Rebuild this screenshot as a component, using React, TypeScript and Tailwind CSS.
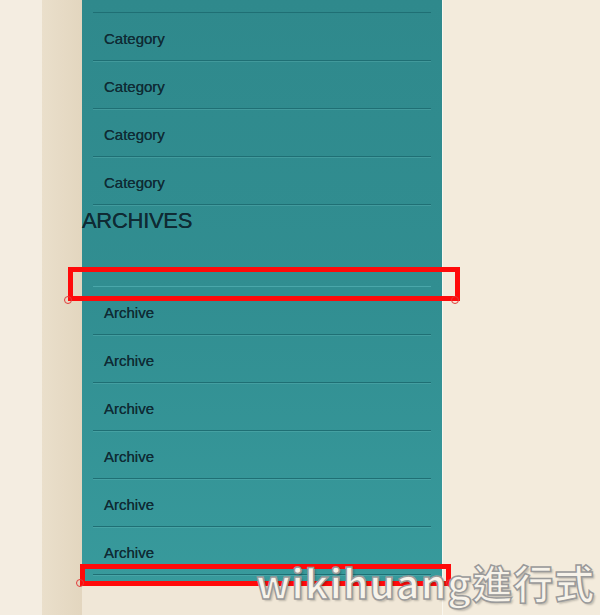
import React from "react";

const Row = ({ label }: { label: string }) => (
  <div className="h-[48px] flex items-center pt-[5px] mx-[11px] border-b border-[#1f6f74] shadow-[0_1px_0_rgba(120,200,200,0.25)]">
    <span className="pl-[11px] text-[15px] text-[#0f2c35] [font-family:'Liberation_Sans',Arial,sans-serif] [text-shadow:0_0_0.4px_#0f2c35]">{label}</span>
  </div>
);

export default function App() {
  return (
    <div className="relative w-[600px] h-[615px] overflow-hidden flex bg-[#f3ebdc] [font-family:'Liberation_Sans',Arial,sans-serif]">
      <div className="w-[42px] h-full bg-[#f4ede1]" />
      <div className="w-[40px] h-full bg-gradient-to-r from-[#eadfcb] to-[#e3d6bf]" />
      <div className="w-[360px] h-full flex flex-col">
        <div className="h-[585px] bg-gradient-to-b from-[#2f898c] via-[#318e91] to-[#389a9c] flex flex-col">
          <div className="h-[13px] mx-[11px] border-b border-[#1f6f74]" />
          <Row label="Category" />
          <Row label="Category" />
          <Row label="Category" />
          <Row label="Category" />
          <h2 className="h-[30px] flex items-center text-[22px] leading-none text-[#0f2a33] tracking-[-0.3px] mt-[1px] [text-shadow:0_0_0.4px_#0f2a33]">ARCHIVES</h2>
          <div className="h-[51px] mx-[11px] border-b border-[#4aa7aa]" />
          <Row label="Archive" />
          <Row label="Archive" />
          <Row label="Archive" />
          <Row label="Archive" />
          <Row label="Archive" />
          <Row label="Archive" />
        </div>
        <div className="flex-1 bg-[#f0e7d7]" />
      </div>
      <div className="flex-1 h-full bg-[#f3ebdc] border-l border-[#f9f6ee]" />

      {/* red annotation boxes */}
      <div className="absolute left-[68px] top-[267px] w-[392px] h-[34px] border-[5px] border-[#ff0a0a]" />
      <div className="absolute left-[64px] top-[296px] w-[8px] h-[8px] rounded-full border border-[#e23a3a]" />
      <div className="absolute left-[451px] top-[296px] w-[8px] h-[8px] rounded-full border border-[#e23a3a]" />
      <div className="absolute left-[80px] top-[564px] w-[371px] h-[22px] border-[5px] border-[#ff0a0a]" />
      <div className="absolute left-[76px] top-[579px] w-[8px] h-[8px] rounded-full border border-[#e23a3a]" />
      <div className="absolute left-[446px] top-[579px] w-[8px] h-[8px] rounded-full border border-[#e23a3a]" />

      {/* watermark */}
      <div className="absolute left-[256px] top-[562px] text-[40px] leading-none font-bold text-[#f7f3ea] [-webkit-text-stroke:1.5px_#9a9a9a] [text-shadow:2px_2px_2px_rgba(0,0,0,0.2)] tracking-[1px] whitespace-nowrap [font-family:'Noto_Sans_CJK_TC','Noto_Sans',sans-serif]">
        wikihuang進行式
      </div>
    </div>
  );
}
